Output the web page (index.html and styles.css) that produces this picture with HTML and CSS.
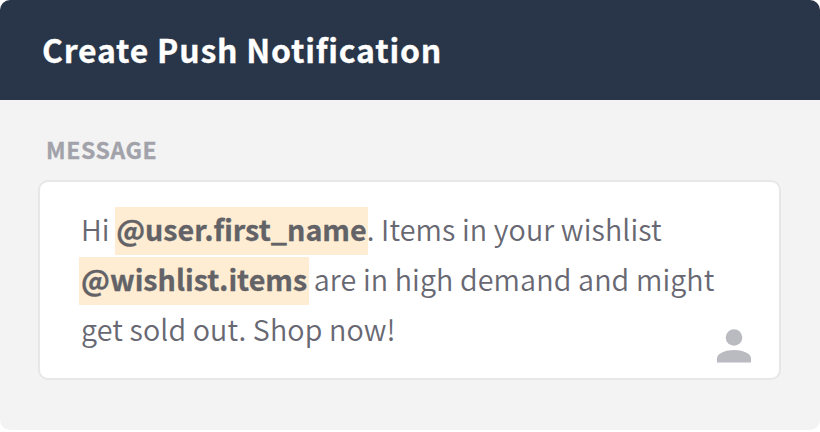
FILE: index.html
```html
<!DOCTYPE html>
<html lang="en">
<head>
  <meta charset="UTF-8">
  <meta name="viewport" content="width=device-width, initial-scale=1.0">
  <title>Create Push Notification</title>
  <link rel="stylesheet" href="styles.css">
</head>
<body>
  <div class="panel">
    <header class="panel-header">
      <h1>Create Push Notification</h1>
    </header>
    <main class="panel-body">
      <h2 class="label">MESSAGE</h2>
      <div class="message">
        <p class="message-text">
          <span class="line">Hi <span class="tag tag-name">@user.first_name</span>. Items in your wishlist</span>
          <span class="line"><span class="tag tag-items">@wishlist.items</span> are in high demand and might</span>
          <span class="line">get sold out. Shop now!</span>
        </p>
        <svg class="user-icon" viewBox="0 0 34 34">
          <circle cx="17" cy="8.500" r="8.300"/>
          <path d="M0 33.400v-4.200C0 24 9 20.900 17 20.900s17 3.100 17 8.300v4.200z"/>
        </svg>
      </div>
    </main>
  </div>
</body>
</html>
```

FILE: styles.css
```css
* {
  box-sizing: border-box;
}
body {
  margin: 0;
  background-color: #fff;
  font-family: "Noto Sans CJK SC", "Noto Sans", sans-serif;
}
h1, h2, p {
  margin: 0;
}
.panel {
  height: 430px;
  border-radius: 10px;
  overflow: hidden;
  background-color: #f3f3f3;
}
.panel-header {
  height: 100px;
  padding: 24px 42px 0;
  background-color: #293548;
}
.panel-header h1 {
  font-size: 32px;
  line-height: 50px;
  font-weight: bold;
  letter-spacing: 0.77px;
  color: #fff;
  -webkit-text-stroke: 0.3px #fff;
}
.panel-body {
  padding: 33px 39px 0 38px;
}
.label {
  padding-left: 8px;
  font-size: 23px;
  line-height: 32px;
  letter-spacing: 0.6px;
  color: #a2a2aa;
  -webkit-text-stroke: 0.3px #a2a2aa;
}
.message {
  position: relative;
  height: 200px;
  margin-top: 15px;
  padding: 24px 41px;
  border: 2px solid #e7e7e7;
  border-radius: 10px;
  background-color: #fff;
}
.message-text {
  font-size: 28.7px;
  font-weight: 350;
  letter-spacing: 0.12px;
  color: #686873;
}
.line {
  display: block;
  height: 50px;
  line-height: 46px;
  white-space: nowrap;
}
.tag {
  display: inline-block;
  height: 48px;
  line-height: 44px;
  margin: 0 -2px;
  padding: 0 2px;
  font-weight: bold;
  letter-spacing: 0;
  color: #626267;
  background-color: #feedd2;
  -webkit-text-stroke: 0.3px #626267;
}
.tag-name {
  margin: 0 -1px;
  padding: 0 1px;
}
.user-icon {
  position: absolute;
  right: 28px;
  bottom: 15px;
  width: 34px;
  height: 34px;
  fill: #babac1;
}
```
